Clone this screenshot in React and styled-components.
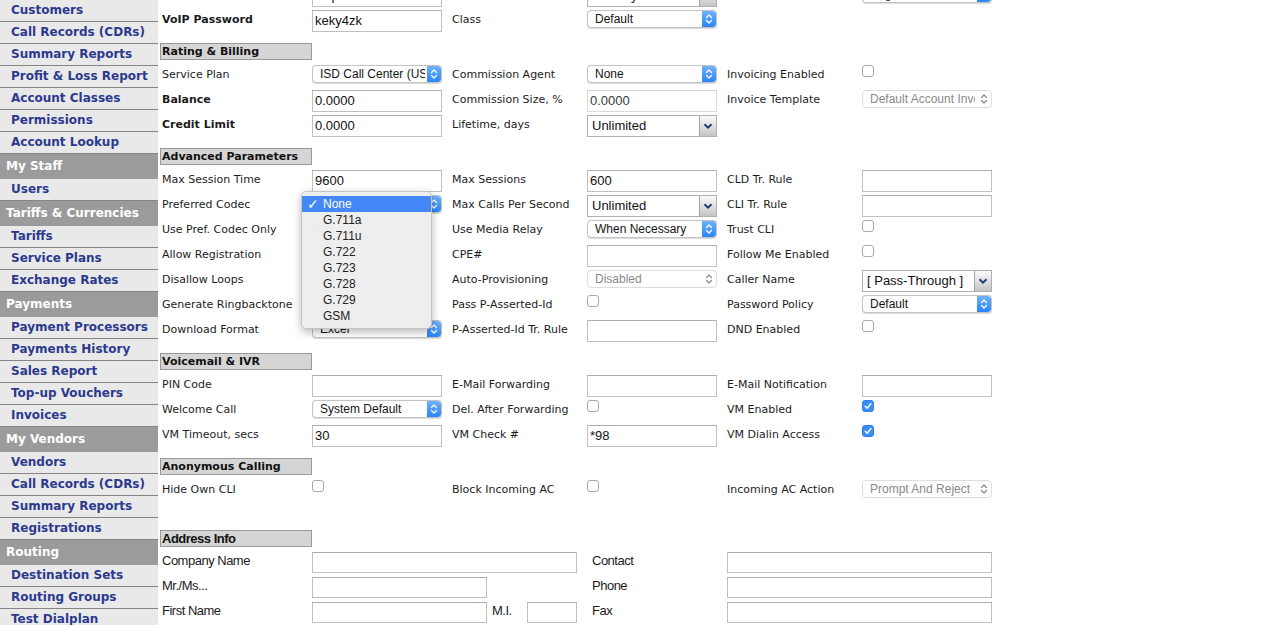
import React from 'react';
import styled, { createGlobalStyle } from 'styled-components';

const GlobalStyle = createGlobalStyle`
  html, body {
    margin: 0;
    padding: 0;
    background: #ffffff;
    overflow: hidden;
  }
  body {
    font-family: "DejaVu Sans", Verdana, sans-serif;
  }
`;

const NARROW = '"Liberation Sans Narrow", "Liberation Sans", Arial, sans-serif';
const VERDANA = '"DejaVu Sans", Verdana, sans-serif';

const Page = styled.div`
  display: flex;
  align-items: flex-start;
  height: 625px;
  overflow: hidden;
`;

const Sidebar = styled.nav`
  width: 158px;
  flex-shrink: 0;
  background: #e9e9e9;
`;

const NavItem = styled.a`
  display: block;
  height: 21px;
  line-height: 21px;
  padding-left: 11px;
  border-bottom: 1px solid #858585;
  font-family: ${VERDANA};
  font-weight: bold;
  font-size: 12px;
  color: #2c3a8e;
  text-decoration: none;
  white-space: nowrap;
`;

const NavHeader = styled.div`
  height: 25px;
  line-height: 25px;
  padding-left: 6px;
  background: #9b9b9b;
  font-family: ${VERDANA};
  font-weight: bold;
  font-size: 12px;
  color: #ffffff;
  white-space: nowrap;
`;

const Main = styled.main`
  flex: 1;
  margin-top: -17px;
  padding-left: 2px;
`;

const Section = styled.section`
  margin-top: ${p => p.$gap}px;
`;

const SectionTitle = styled.div`
  width: 149px;
  height: 15px;
  line-height: 15px;
  padding-left: 1px;
  margin-bottom: 3px;
  border: 1px solid #9a9a9a;
  background: #d5d5d5;
  font-family: ${p => (p.$narrow ? NARROW : VERDANA)};
  font-size: ${p => (p.$narrow ? 13 : 11)}px;
  letter-spacing: ${p => (p.$narrow ? '-0.5px' : 'normal')};
  font-weight: bold;
  color: #111111;
  white-space: nowrap;
`;

const Row = styled.div`
  display: grid;
  grid-template-columns: ${p => p.$cols};
  height: 25px;
  padding-left: 2px;
`;

const Cell = styled.div`
  position: relative;
  box-sizing: border-box;
  height: 25px;
  padding-top: 2px;
  min-width: 0;
  display: flex;
  align-items: flex-start;
  gap: 5px;
`;

const Label = styled.span`
  padding-top: ${p => (p.$narrow ? 0 : 1)}px;
  font-family: ${p => (p.$narrow ? NARROW : VERDANA)};
  font-size: ${p => (p.$narrow ? 13 : 11)}px;
  letter-spacing: ${p => (p.$narrow ? '-0.5px' : 'normal')};
  line-height: 18px;
  font-weight: ${p => (p.$bold ? 'bold' : 'normal')};
  color: #1c1c1c;
  white-space: nowrap;
  width: ${p => (p.$w ? `${p.$w}px` : 'auto')};
`;

const TextInput = styled.div`
  box-sizing: border-box;
  width: ${p => p.$w || 130}px;
  height: ${p => p.$h || 22}px;
  padding: 0 2px;
  border: 1px solid ${p => (p.$muted ? '#dadada' : '#c0c0c0')};
  border-top-color: ${p => (p.$muted ? '#d2d2d2' : '#acacac')};
  background: #ffffff;
  font-family: "Liberation Sans", Arial, sans-serif;
  font-size: 13px;
  line-height: 20px;
  color: ${p => (p.$muted ? '#3a3a3a' : '#111111')};
  white-space: nowrap;
  overflow: hidden;
`;

const MacSelect = styled.div`
  box-sizing: border-box;
  width: 130px;
  height: 18px;
  display: flex;
  align-items: stretch;
  border: 1px solid ${p => (p.$disabled ? '#dddddd' : '#c4c4c4')};
  border-radius: 4px;
  background: #ffffff;
  overflow: hidden;
  box-shadow: ${p => (p.$disabled ? 'none' : '0 0.5px 1px rgba(0,0,0,0.15)')};
`;

const MacText = styled.span`
  flex: 1;
  min-width: 0;
  padding-left: 7px;
  margin-right: 2px;
  font-family: "Liberation Sans", Arial, sans-serif;
  font-size: 12px;
  line-height: 16px;
  color: ${p => (p.$disabled ? '#8a8a8a' : '#141414')};
  white-space: nowrap;
  overflow: hidden;
`;

const Stepper = styled.span`
  width: 14px;
  flex-shrink: 0;
  display: flex;
  align-items: center;
  justify-content: center;
  background: ${p => (p.$disabled ? 'transparent' : 'linear-gradient(#6fb2fb, #2b84f7)')};
  border-radius: 0 3px 3px 0;
`;

const OldSelect = styled.div`
  box-sizing: border-box;
  width: 130px;
  height: 22px;
  display: flex;
  align-items: stretch;
  border: 1px solid #b0b0b0;
  background: #ffffff;
`;

const OldText = styled.span`
  flex: 1;
  min-width: 0;
  padding-left: 4px;
  font-family: "Liberation Sans", Arial, sans-serif;
  font-size: 13px;
  line-height: 20px;
  color: #111111;
  white-space: nowrap;
  overflow: hidden;
`;

const OldButton = styled.span`
  width: 16px;
  flex-shrink: 0;
  display: flex;
  align-items: center;
  justify-content: center;
  border-left: 1px solid #a5a5a5;
  background: linear-gradient(#fafafa, #c6c6c6);
`;

const Checkbox = styled.span`
  box-sizing: border-box;
  width: 12px;
  height: 12px;
  display: flex;
  align-items: center;
  justify-content: center;
  border: 1px solid ${p => (p.$checked ? '#2f7fe6' : '#a9a9a9')};
  border-radius: 3px;
  background: ${p => (p.$checked ? '#3a8df7' : '#ffffff')};
`;

const Menu = styled.div`
  position: absolute;
  left: -11px;
  top: -2px;
  z-index: 10;
  box-sizing: border-box;
  width: 131px;
  padding: 4px 0;
  border: 1px solid #c4c4c4;
  border-radius: 5px;
  background: rgba(238, 238, 238, 0.98);
  box-shadow: 0 3px 9px rgba(0, 0, 0, 0.28);
`;

const MenuItem = styled.div`
  position: relative;
  height: 16px;
  line-height: 16px;
  padding-left: 21px;
  font-family: "Liberation Sans", Arial, sans-serif;
  font-size: 12px;
  color: ${p => (p.$active ? '#ffffff' : '#222222')};
  background: ${p => (p.$active ? '#4388f6' : 'transparent')};
`;

const Tick = styled.span`
  position: absolute;
  left: 5px;
  top: 0;
  font-family: "DejaVu Sans", sans-serif;
  font-size: 14px;
  font-weight: bold;
`;

const Chevrons = ({ disabled }) => (
  <svg width="10" height="14" viewBox="0 0 10 14">
    <path d="M2.5 5.5 L5 3 L7.5 5.5 M2.5 8.5 L5 11 L7.5 8.5" fill="none" stroke={disabled ? '#8c8c8c' : '#ffffff'} strokeWidth="1.3" strokeLinecap="round" strokeLinejoin="round" />
  </svg>
);

const DownChevron = () => (
  <svg width="12" height="10" viewBox="0 0 12 10">
    <path d="M2.5 3.2 L6 6.6 L9.5 3.2" fill="none" stroke="#263c78" strokeWidth="2" />
  </svg>
);

const CheckMark = () => (
  <svg width="10" height="10" viewBox="0 0 10 10">
    <path d="M2.2 5.2 L4.2 7.3 L7.9 2.6" fill="none" stroke="#ffffff" strokeWidth="1.5" strokeLinecap="round" strokeLinejoin="round" />
  </svg>
);

const codecs = ['None', 'G.711a', 'G.711u', 'G.722', 'G.723', 'G.728', 'G.729', 'GSM'];

const CodecMenu = () => (
  <Menu>
    {codecs.map((c, i) => (
      <MenuItem key={c} $active={i === 0}>
        {i === 0 && <Tick>✓</Tick>}
        {c}
      </MenuItem>
    ))}
  </Menu>
);

const Field = ({ f, narrow }) => {
  if (!f) return <Cell />;
  switch (f.t) {
    case 'label':
      return (
        <Cell>
          <Label $bold={f.bold} $narrow={narrow}>{f.text}</Label>
        </Cell>
      );
    case 'input':
      return (
        <Cell>
          <TextInput $muted={f.muted} $w={f.w} $h={narrow ? 21 : 22}>{f.value}</TextInput>
        </Cell>
      );
    case 'mac':
      return (
        <Cell>
          <MacSelect $disabled={f.disabled}>
            <MacText $disabled={f.disabled}>{f.value}</MacText>
            <Stepper $disabled={f.disabled}>
              <Chevrons disabled={f.disabled} />
            </Stepper>
          </MacSelect>
          {f.menu && <CodecMenu />}
        </Cell>
      );
    case 'old':
      return (
        <Cell>
          <OldSelect>
            <OldText>{f.value}</OldText>
            <OldButton>
              <DownChevron />
            </OldButton>
          </OldSelect>
        </Cell>
      );
    case 'check':
      return (
        <Cell>
          <Checkbox $checked={f.checked}>{f.checked && <CheckMark />}</Checkbox>
        </Cell>
      );
    case 'mi':
      return (
        <Cell>
          <TextInput $w={175} $h={21} />
          <Label $narrow $w={30}>M.I.</Label>
          <TextInput $w={50} $h={21} />
        </Cell>
      );
    default:
      return <Cell />;
  }
};

const L = (text, bold) => ({ t: 'label', text, bold });
const I = (value = '', muted) => ({ t: 'input', value, muted });
const M = (value, disabled) => ({ t: 'mac', value, disabled });
const O = value => ({ t: 'old', value });
const C = checked => ({ t: 'check', checked });

const MAIN_COLS = '150px 140px 135px 140px 135px 130px';
const ADDR_COLS = '150px 280px 135px 265px';

const sections = [
  {
    gap: 0,
    rows: [
      [L('Company Name'), I('Department of Revenue'), L('Billing Period'), O('Monthly'), L('Language (UI)'), M('English')],
      [L('VoIP Password', true), I('keky4zk'), L('Class'), M('Default'), null, null],
    ],
  },
  {
    title: 'Rating & Billing',
    gap: 10,
    rows: [
      [L('Service Plan'), M('ISD Call Center (USD)'), L('Commission Agent'), M('None'), L('Invoicing Enabled'), C(false)],
      [L('Balance', true), I('0.0000'), L('Commission Size, %'), I('0.0000', true), L('Invoice Template'), M('Default Account Invoice', true)],
      [L('Credit Limit', true), I('0.0000'), L('Lifetime, days'), O('Unlimited'), null, null],
    ],
  },
  {
    title: 'Advanced Parameters',
    gap: 10,
    rows: [
      [L('Max Session Time'), I('9600'), L('Max Sessions'), I('600'), L('CLD Tr. Rule'), I()],
      [L('Preferred Codec'), { t: 'mac', value: 'None', menu: true }, L('Max Calls Per Second'), O('Unlimited'), L('CLI Tr. Rule'), I()],
      [L('Use Pref. Codec Only'), C(false), L('Use Media Relay'), M('When Necessary'), L('Trust CLI'), C(false)],
      [L('Allow Registration'), C(false), L('CPE#'), I(), L('Follow Me Enabled'), C(false)],
      [L('Disallow Loops'), C(false), L('Auto-Provisioning'), M('Disabled', true), L('Caller Name'), O('[ Pass-Through ]')],
      [L('Generate Ringbacktone'), C(false), L('Pass P-Asserted-Id'), C(false), L('Password Policy'), M('Default')],
      [L('Download Format'), M('Excel'), L('P-Asserted-Id Tr. Rule'), I(), L('DND Enabled'), C(false)],
    ],
  },
  {
    title: 'Voicemail & IVR',
    gap: 10,
    rows: [
      [L('PIN Code'), I(), L('E-Mail Forwarding'), I(), L('E-Mail Notification'), I()],
      [L('Welcome Call'), M('System Default'), L('Del. After Forwarding'), C(false), L('VM Enabled'), C(true)],
      [L('VM Timeout, secs'), I('30'), L('VM Check #'), I('*98'), L('VM Dialin Access'), C(true)],
    ],
  },
  {
    title: 'Anonymous Calling',
    gap: 10,
    rows: [[L('Hide Own CLI'), C(false), L('Block Incoming AC'), C(false), L('Incoming AC Action'), M('Prompt And Reject', true)]],
  },
  {
    title: 'Address Info',
    gap: 27,
    narrow: true,
    rows: [
      [L('Company Name'), { t: 'input', value: '', w: 265 }, L('Contact'), { t: 'input', value: '', w: 265 }],
      [L('Mr./Ms...'), { t: 'input', value: '', w: 175 }, L('Phone'), { t: 'input', value: '', w: 265 }],
      [L('First Name'), { t: 'mi' }, L('Fax'), { t: 'input', value: '', w: 265 }],
    ],
  },
];

const nav = [
  ['Customers'],
  ['Call Records (CDRs)'],
  ['Summary Reports'],
  ['Profit & Loss Report'],
  ['Account Classes'],
  ['Permissions'],
  ['Account Lookup'],
  ['My Staff', true],
  ['Users'],
  ['Tariffs & Currencies', true],
  ['Tariffs'],
  ['Service Plans'],
  ['Exchange Rates'],
  ['Payments', true],
  ['Payment Processors'],
  ['Payments History'],
  ['Sales Report'],
  ['Top-up Vouchers'],
  ['Invoices'],
  ['My Vendors', true],
  ['Vendors'],
  ['Call Records (CDRs)'],
  ['Summary Reports'],
  ['Registrations'],
  ['Routing', true],
  ['Destination Sets'],
  ['Routing Groups'],
  ['Test Dialplan'],
];

export default function App() {
  return (
    <Page>
      <GlobalStyle />
      <Sidebar>
        {nav.map(([text, header], i) =>
          header ? <NavHeader key={i}>{text}</NavHeader> : <NavItem key={i} href="#">{text}</NavItem>
        )}
      </Sidebar>
      <Main>
        {sections.map((s, si) => (
          <Section key={si} $gap={s.gap}>
            {s.title && <SectionTitle $narrow={s.narrow}>{s.title}</SectionTitle>}
            {s.rows.map((r, ri) => (
              <Row key={ri} $cols={s.narrow ? ADDR_COLS : MAIN_COLS}>
                {r.map((f, fi) => (
                  <Field key={fi} f={f} narrow={s.narrow} />
                ))}
              </Row>
            ))}
          </Section>
        ))}
      </Main>
    </Page>
  );
}
